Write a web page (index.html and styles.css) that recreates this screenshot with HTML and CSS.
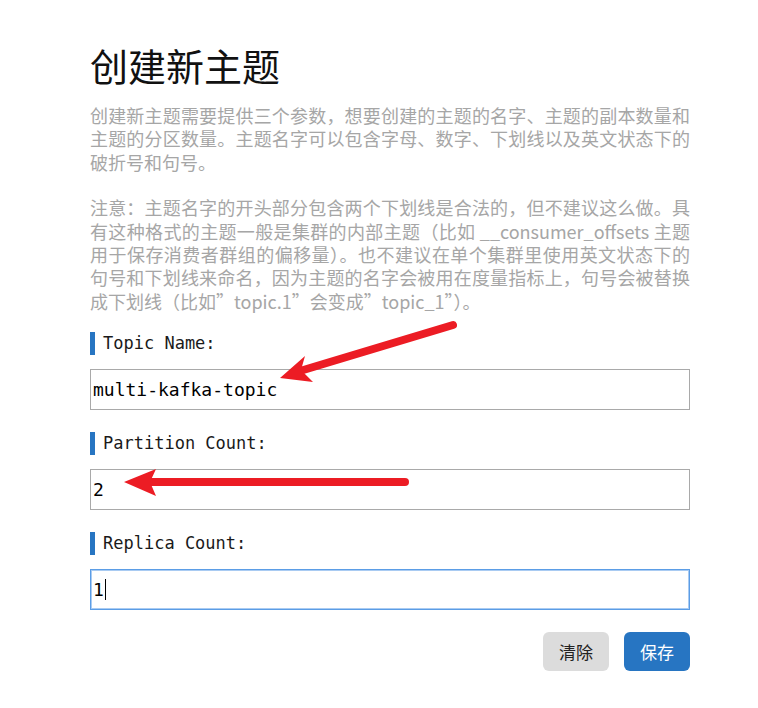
FILE: index.html
```html
<!DOCTYPE html>
<html lang="zh-CN">
<head>
    <meta charset="UTF-8">
    <meta name="viewport" content="width=device-width, initial-scale=1.0">
    <title>创建新主题</title>
    <link rel="stylesheet" href="styles.css">
</head>
<body>

<div class="page">
    <h1>创建新主题</h1>

    <!-- Intro -->
    <p class="intro">创建新主题需要提供三个参数，想要创建的主题的名字、主题的副本数量和主题的分区数量。主题名字可以包含字母、数字、下划线以及英文状态下的破折号和句号。</p>
    <p class="intro">注意：主题名字的开头部分包含两个下划线是合法的，但不建议这么做。具有这种格式的主题一般是集群的内部主题（比如 __consumer_offsets 主题用于保存消费者群组的偏移量）。也不建议在单个集群里使用英文状态下的句号和下划线来命名，因为主题的名字会被用在度量指标上，句号会被替换成下划线（比如”topic.1”会变成”topic_1”）。</p>

    <!-- Form -->
    <div class="field">
        <label class="label" for="topicName">Topic Name:</label>
        <input class="input" type="text" id="topicName" value="multi-kafka-topic">
    </div>

    <div class="field">
        <label class="label" for="partitions">Partition Count:</label>
        <input class="input" type="text" id="partitions" value="2">
    </div>

    <div class="field">
        <label class="label" for="replicas">Replica Count:</label>
        <div class="input focused" id="replicas">1<span class="caret"></span></div>
    </div>

    <div class="actions">
        <button class="btn grey">清除</button>
        <button class="btn blue">保存</button>
    </div>
</div>

<!-- annotation arrows drawn on top of the screenshot -->
<svg class="marks" width="758" height="708" viewBox="0 0 758 708">
    <line x1="453" y1="325" x2="300" y2="371" stroke="#ec1c24" stroke-width="8" stroke-linecap="round"/>
    <polygon points="280,378 305,356 301,370 313,382" fill="#ec1c24"/>
    <line x1="405" y1="482" x2="145" y2="482" stroke="#ec1c24" stroke-width="8" stroke-linecap="round"/>
    <polygon points="124,482 156,469 150,482 156,496" fill="#ec1c24"/>
</svg>

</body>
</html>
```

FILE: styles.css
```css
body {
    margin: 0;
    background: #fff;
    font-family: "Noto Sans CJK SC", "Noto Sans", sans-serif;
}
.page {
    width: 600px;
    margin-left: 90px;
    padding-top: 40px;
}
h1 {
    margin: 0 0 14px 0;
    font-size: 38px;
    line-height: 50px;
    font-weight: normal;
    color: #111;
}
.intro {
    margin: 0 0 22px 0;
    font-size: 18px;
    line-height: 23.4px;
    color: #a6a6a6;
    text-align: justify;
}
.intro + .intro {
    margin-bottom: 19px;
}
.field {
    display: flex;
    flex-direction: column;
    gap: 14px;
    margin-bottom: 22px;
}
.label {
    border-left: 5px solid #2775c2;
    padding-left: 8px;
    font-family: "DejaVu Sans Mono", monospace;
    font-size: 17px;
    line-height: 23px;
    color: #1a1a1a;
}
.input {
    box-sizing: border-box;
    height: 41px;
    width: 100%;
    border: 1px solid #a9a9a9;
    padding: 0 2px;
    font-family: "DejaVu Sans Mono", monospace;
    font-size: 18px;
    color: #000;
    background: #fff;
    outline: none;
}
.focused {
    display: flex;
    align-items: center;
    border-color: #5b9de6;
    box-shadow: inset 0 0 0 1px #a9cbf2;
}
.caret {
    display: inline-block;
    width: 1px;
    height: 21px;
    margin-left: 1px;
    background: #000;
}
.actions {
    display: flex;
    justify-content: flex-end;
    gap: 15px;
}
.btn {
    width: 66px;
    height: 39px;
    border: none;
    border-radius: 6px;
    font-family: "Noto Sans CJK SC", sans-serif;
    font-size: 17px;
}
.grey { background: #dcdcdc; color: #222; }
.blue { background: #2775c2; color: #fff; }
.marks {
    position: absolute;
    top: 0;
    left: 0;
    pointer-events: none;
}
```
